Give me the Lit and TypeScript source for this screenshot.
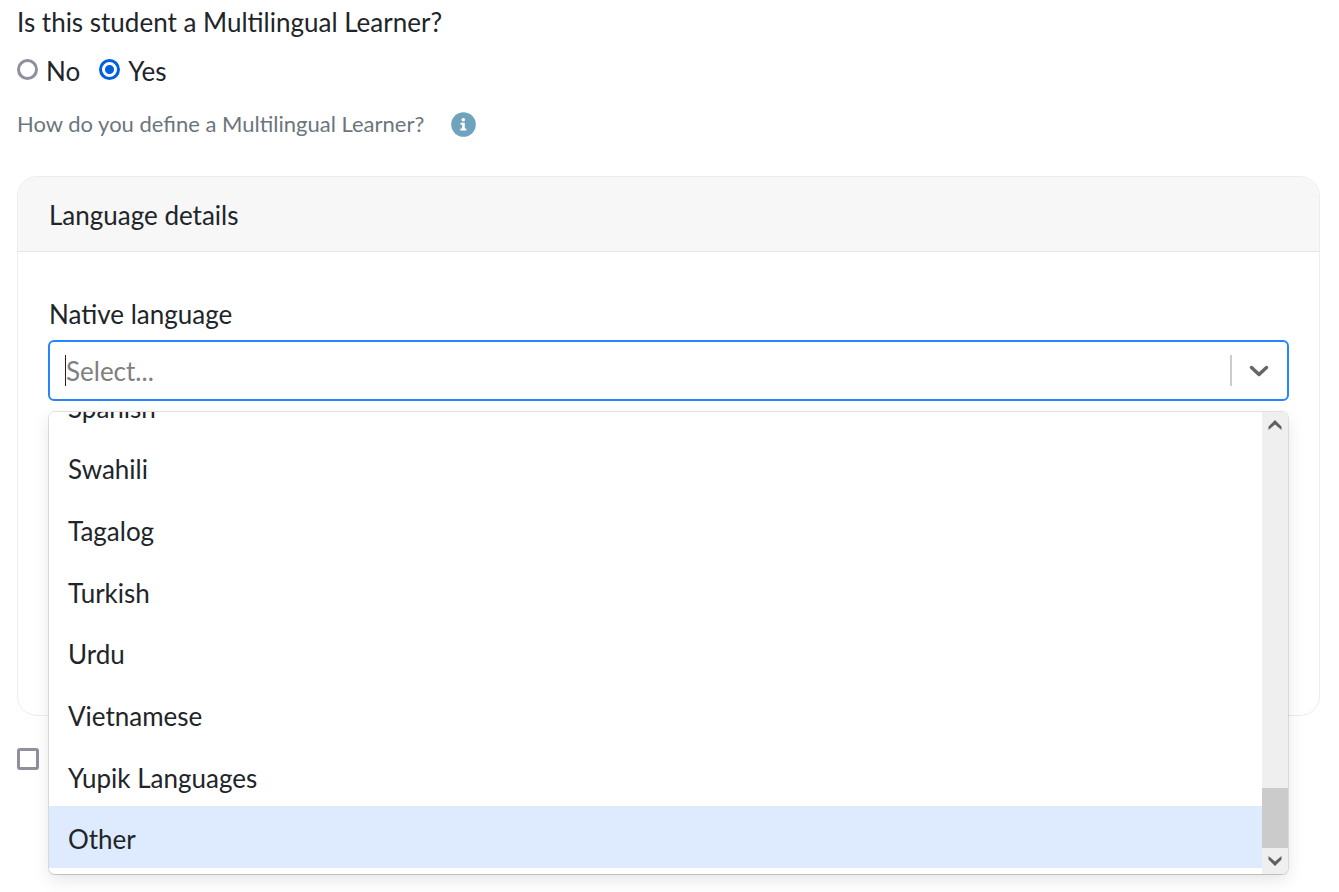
import { LitElement, html, css } from "lit";
import { customElement, state } from "lit/decorators.js";

const LANGUAGES = [
  "Spanish",
  "Swahili",
  "Tagalog",
  "Turkish",
  "Urdu",
  "Vietnamese",
  "Yupik Languages",
  "Other",
];

@customElement("language-select")
class LanguageSelect extends LitElement {
  @state() private active = "Other";

  static styles = css`
    :host {
      display: block;
      position: relative;
    }
    * {
      box-sizing: border-box;
    }
    .label {
      display: block;
      line-height: 32px;
      padding-left: 1px;
      margin-bottom: 10px;
    }
    .control {
      display: flex;
      align-items: center;
      height: 61px;
      padding: 0 15px;
      border: 2px solid #2684ff;
      border-radius: 6px;
      background: #fff;
    }
    .caret {
      width: 1px;
      height: 31px;
      background: #212529;
    }
    .input {
      flex: 1;
      min-width: 0;
      height: 40px;
      padding: 0;
      border: 0;
      outline: 0;
      background: none;
      font: inherit;
      color: inherit;
    }
    .input::placeholder {
      color: #808080;
      opacity: 1;
    }
    .toggle {
      display: flex;
      align-items: center;
      justify-content: center;
      width: 42px;
      height: 31px;
      padding: 0 0 0 14px;
      border: 0;
      border-left: 2px solid #ccc;
      background: none;
    }
    .toggle svg {
      flex: none;
      width: 24px;
      height: 20px;
    }
    .menu {
      position: absolute;
      top: 100%;
      left: 1px;
      right: 1px;
      z-index: 1;
      display: flex;
      height: 462px;
      margin-top: 11px;
      border-radius: 6px;
      overflow: hidden;
      background: #fff;
    }
    .shadow {
      position: absolute;
      top: 100%;
      left: 1px;
      right: 1px;
      height: 462px;
      margin-top: 11px;
      border-radius: 6px;
      box-shadow: 0 0 0 1px rgba(0, 0, 0, 0.1), 0 6px 17px rgba(0, 0, 0, 0.1),
        0 1px 1px rgba(0, 0, 0, 0.1);
    }
    .list {
      flex: 1;
      display: flex;
      flex-direction: column;
      justify-content: flex-end;
      overflow: hidden;
      padding-bottom: 6px;
    }
    .options {
      display: grid;
      grid-auto-rows: 1fr;
      flex: none;
      height: 493px;
      margin: 0;
      padding: 0;
      list-style: none;
    }
    .option {
      display: flex;
      align-items: center;
      padding: 4px 19px 0;
    }
    .option.active {
      background: #deebff;
    }
    .bar {
      display: flex;
      flex-direction: column;
      width: 26px;
      background: #efefef;
    }
    .step {
      display: flex;
      align-items: center;
      justify-content: center;
      height: 26px;
      padding: 0;
      border: 0;
      background: none;
    }
    .step svg {
      width: 14px;
      height: 12px;
    }
    .track {
      flex: 1;
      display: flex;
      flex-direction: column;
      justify-content: flex-end;
    }
    .thumb {
      height: 60px;
      background: #cbcbcb;
    }
  `;

  render() {
    return html`
      <label class="label" for="native">Native language</label>
      <div class="control">
        <span class="caret"></span>
        <input
          class="input"
          id="native"
          type="text"
          role="combobox"
          aria-expanded="true"
          aria-controls="languages"
          autocomplete="off"
          placeholder="Select..."
        />
        <button class="toggle" type="button" aria-label="Toggle menu">
          <svg viewBox="0 0 24 20" fill="none" stroke="#666" stroke-width="3.500" stroke-linecap="round" stroke-linejoin="round">
            <path d="M4.500 6.500 12 13.500 19.500 6.500" />
          </svg>
        </button>
      </div>
      <div class="shadow"></div>
      <div class="menu">
        <div class="list">
          <ul class="options" id="languages" role="listbox" aria-label="Native language">
            ${LANGUAGES.map(
              (name) => html`<li
                class="option ${name === this.active ? "active" : ""}"
                role="option"
                aria-selected=${name === this.active}
                @mouseenter=${() => (this.active = name)}
              >${name}</li>`
            )}
          </ul>
        </div>
        <div class="bar">
          <button class="step" type="button" aria-label="Scroll up">
            <svg viewBox="0 0 14 12"><path d="M7 1 13.500 7.500V11L7 5.500 .5 11V7.500z" fill="#606060" /></svg>
          </button>
          <div class="track"><div class="thumb"></div></div>
          <button class="step" type="button" aria-label="Scroll down">
            <svg viewBox="0 0 14 12"><path d="M7 11 .5 4.500V1L7 6.500 13.500 1V4.500z" fill="#606060" /></svg>
          </button>
        </div>
      </div>
    `;
  }
}

@customElement("app-root")
class AppRoot extends LitElement {
  static styles = css`
    :host {
      display: block;
      box-sizing: border-box;
      min-height: 100vh;
      padding: 6px 19px 0 17px;
      font-family: Lato, sans-serif;
      font-size: 26px;
      line-height: 32px;
      color: #212529;
    }
    * {
      box-sizing: border-box;
    }
    .group {
      margin: 0;
      padding: 0;
      border: 0;
    }
    .question {
      padding: 0;
    }
    .choices {
      display: flex;
      gap: 19px;
      margin-top: 17px;
    }
    .choice {
      display: flex;
      align-items: center;
      gap: 8px;
    }
    .radio {
      appearance: none;
      width: 21px;
      height: 21px;
      margin: 0 0 4px;
      border: 3px solid #8f8f9d;
      border-radius: 50%;
      background: #fff;
    }
    .radio:checked {
      border-color: #0060df;
      background: radial-gradient(circle, #0060df 4px, #fff 5px);
    }
    .hint {
      display: flex;
      align-items: center;
      gap: 27px;
      margin-top: 22px;
      font-size: 22px;
      line-height: 30px;
      color: #6c757d;
    }
    .info {
      width: 25px;
      height: 25px;
      padding: 0;
      border: 0;
      background: none;
    }
    .info svg {
      display: block;
    }
    .card {
      margin-top: 37px;
      border: 1px solid #ededed;
      border-radius: 20px;
    }
    .heading {
      margin: 0;
      padding: 22px 31px 20px;
      border-bottom: 1px solid #e6e6e6;
      border-radius: 19px 19px 0 0;
      background: #f7f7f7;
      font: inherit;
    }
    .body {
      min-height: 463px;
      padding: 46px 30px 32px;
    }
    .check {
      appearance: none;
      display: block;
      width: 22px;
      height: 22px;
      margin: 32px 0 0;
      border: 3px solid #8f8f9d;
      border-radius: 3px;
      background: #fff;
    }
    .check:checked {
      background: #0060df;
    }
  `;

  render() {
    return html`
      <fieldset class="group">
        <legend class="question">Is this student a Multilingual Learner?</legend>
        <div class="choices">
          <label class="choice"><input class="radio" type="radio" name="ml" value="no" />No</label>
          <label class="choice"><input class="radio" type="radio" name="ml" value="yes" checked />Yes</label>
        </div>
      </fieldset>
      <div class="hint">
        <span>How do you define a Multilingual Learner?</span>
        <button class="info" type="button" aria-label="More information">
          <svg width="25" height="25" viewBox="0 0 25 25">
            <circle cx="12.500" cy="12.500" r="12.300" fill="#6fa3bd" />
            <circle cx="12.300" cy="7.700" r="1.800" fill="#fff" />
            <path d="M9.500 10.800h4.300v5.600h1.600v2H9.300v-2h1.800v-3.600H9.500z" fill="#fff" />
          </svg>
        </button>
      </div>
      <section class="card">
        <h2 class="heading">Language details</h2>
        <div class="body"><language-select></language-select></div>
      </section>
      <input class="check" type="checkbox" aria-label="Additional option" />
    `;
  }
}
